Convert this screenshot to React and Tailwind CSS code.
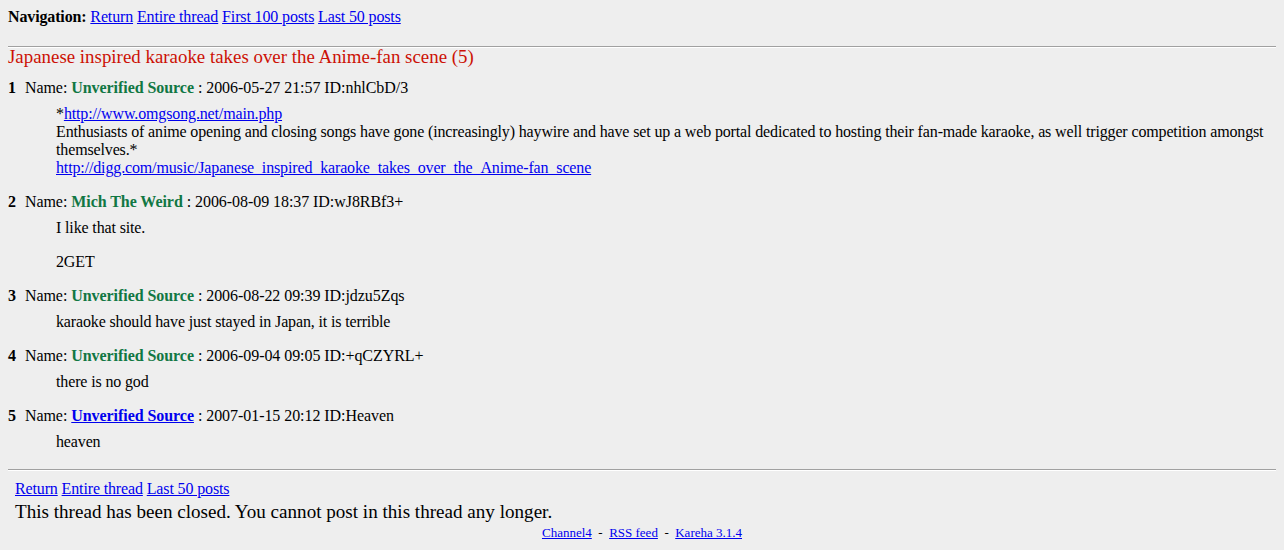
export default function App() {
  const link = "text-[#0000ee] underline";
  const posts = [
    {
      n: 1,
      name: "Unverified Source",
      date: "2006-05-27 21:57 ID:nhlCbD/3",
      body: (
        <p>
          *<a href="#" className={link}>http://www.omgsong.net/main.php</a>
          <br />
          Enthusiasts of anime opening and closing songs have gone (increasingly) haywire and have set up a web portal dedicated to hosting their fan-made karaoke, as well trigger competition amongst themselves.*
          <br />
          <a href="#" className={link}>http://digg.com/music/Japanese_inspired_karaoke_takes_over_the_Anime-fan_scene</a>
        </p>
      ),
    },
    {
      n: 2,
      name: "Mich The Weird",
      date: "2006-08-09 18:37 ID:wJ8RBf3+",
      body: (
        <>
          <p>I like that site.</p>
          <p className="mt-4">2GET</p>
        </>
      ),
    },
    {
      n: 3,
      name: "Unverified Source",
      date: "2006-08-22 09:39 ID:jdzu5Zqs",
      body: <p>karaoke should have just stayed in Japan, it is terrible</p>,
    },
    {
      n: 4,
      name: "Unverified Source",
      date: "2006-09-04 09:05 ID:+qCZYRL+",
      body: <p>there is no god</p>,
    },
    {
      n: 5,
      name: "Unverified Source",
      date: "2007-01-15 20:12 ID:Heaven",
      link: true,
      body: <p>heaven</p>,
    },
  ];
  return (
    <div className="min-h-[550px] bg-[#eeeeee] text-black font-['Liberation_Serif',serif] text-[16px] leading-[18px] tracking-[-0.14px]">
      <div className="px-2 pt-2">
        <div>
          <b>Navigation:</b>{" "}
          <a href="#" className={link}>Return</a>{" "}
          <a href="#" className={link}>Entire thread</a>{" "}
          <a href="#" className={link}>First 100 posts</a>{" "}
          <a href="#" className={link}>Last 50 posts</a>
        </div>
        <div className="mt-[20px] border-t border-t-[#a0a0a0] border-b border-b-[#ffffff]"></div>
        <h2 className="text-[#cc1105] text-[18.9px] leading-[18px] mt-0 tracking-normal">
          Japanese inspired karaoke takes over the Anime-fan scene (5)
        </h2>
        <div className="mt-[13px] flex flex-col gap-4">
          {posts.map((p) => (
            <div key={p.n}>
              <div className="tracking-[-0.06px]">
                <b className="mr-[9px]">{p.n}</b>
                Name:{" "}
                {p.link ? (
                  <a href="#" className="font-bold text-[#0000ee] underline">{p.name}</a>
                ) : (
                  <b className="text-[#117743]">{p.name}</b>
                )}{" "}
                : {p.date}
              </div>
              <div className="ml-12 mt-2">{p.body}</div>
            </div>
          ))}
        </div>
        <div className="mt-[18px] border-t border-t-[#a0a0a0] border-b border-b-[#ffffff]"></div>
        <div className="px-[7px] mt-[9px]">
          <div>
            <a href="#" className={link}>Return</a>{" "}
            <a href="#" className={link}>Entire thread</a>{" "}
            <a href="#" className={link}>Last 50 posts</a>
          </div>
          <div className="text-[19.1px] leading-[22px] mt-[3px] tracking-normal">
            This thread has been closed. You cannot post in this thread any longer.
          </div>
        </div>
        <div className="text-center text-[13px] leading-[15px] mt-[2px] whitespace-pre tracking-normal">
          <a href="#" className={link}>Channel4</a>{"  -  "}
          <a href="#" className={link}>RSS feed</a>{"  -  "}
          <a href="#" className={link}>Kareha 3.1.4</a>
        </div>
      </div>
    </div>
  );
}
